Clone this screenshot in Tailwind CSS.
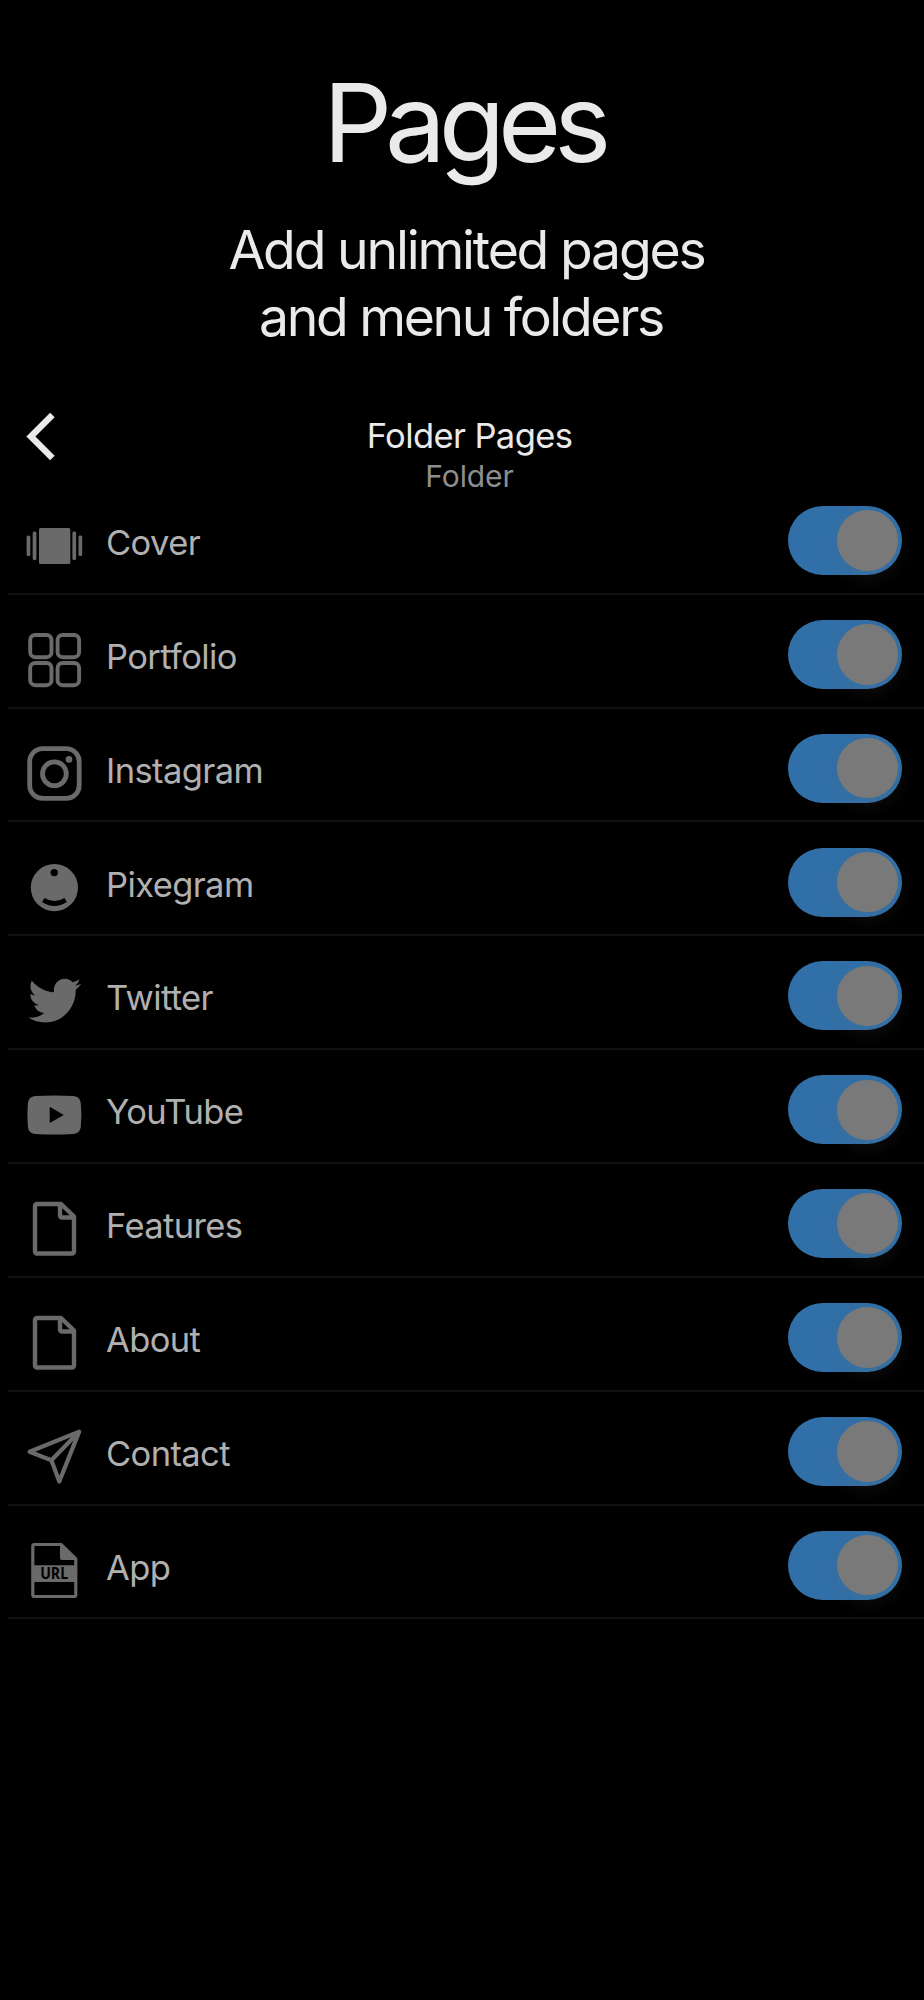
<!DOCTYPE html>
<html lang="en">
<head>
<meta charset="utf-8">
<title>Pages</title>
<script src="https://cdn.jsdelivr.net/npm/@tailwindcss/browser@4"></script>
</head>
<body class="bg-black">
<main class="flex h-[2000px] w-[924px] flex-col overflow-hidden bg-black font-['Inter',sans-serif] text-[#eaeaea]">
  <div class="flex h-[400px] flex-col items-center pt-[58px] text-center">
    <h1 class="ml-[3px] text-[108.5px] leading-[130px] tracking-[-7.3px]">Pages</h1>
    <p class="mt-[28px] ml-[9px] text-[53.5px] leading-[67px] tracking-[-2.2px]">Add unlimited pages</p>
    <p class="mr-[2px] text-[53.5px] leading-[67px] tracking-[-2.35px]">and menu folders</p>
  </div>
  <header class="grid h-[80.8px] shrink-0 grid-cols-[100px_1fr_85px] pt-[11px]">
    <svg class="ml-[24px] h-[52px] w-[36px]" viewBox="0 0 36 52" fill="none" stroke="#eaeaea" stroke-width="6.4"><path d="M28.4 3.900L6.900 25.400l21.500 21.600"/></svg>
    <div class="flex flex-col items-center">
      <h2 class="text-[34.5px] leading-[50px] tracking-[-0.6px]">Folder Pages</h2>
      <p class="-mt-[5px] text-[30px] leading-[40px] tracking-[-0.1px] text-[#8e8e8e]">Folder</p>
    </div>
  </header>
  <ul id="list" class="ml-[8px] text-[34.5px] tracking-[-0.6px] text-[#b0b0b0]"></ul>
</main>

<template id="row">
  <li class="flex h-[113.87px] items-center border-b-2 border-[#111111] pt-[7.5px]">
    <svg class="mt-[11px] ml-[18px] size-[56px] shrink-0 overflow-visible text-[#6a6a6a]" viewBox="0 0 56 56" fill="none"></svg>
    <span class="mt-[5px] ml-[24px] flex-1 leading-[44px]"></span>
    <div class="mr-[22px] flex h-[69px] w-[114px] items-center justify-end overflow-visible rounded-full bg-[#306fa7] pr-[4.5px]">
      <div class="size-[60.5px] rounded-full bg-[#797979] shadow-[0_6px_18px_rgba(121,121,121,0.16)]"></div>
    </div>
  </li>
</template>

<script>
const page = `<path d="M35 3H11a2 2 0 0 0-2 2v45.500a2 2 0 0 0 2 2h35a2 2 0 0 0 2-2V15.500Z M34 4v10.500a2 2 0 0 0 2 2h11" stroke="currentColor" stroke-width="4.400" stroke-linejoin="round"/>`;
const rows = [
  ['Cover', `<g fill="currentColor"><rect x=".6" y="17.600" width="3.700" height="20.400" rx="1.500"/><rect x="6.700" y="13.600" width="3.700" height="28.400" rx="1.500"/><rect x="13" y="9.900" width="31.300" height="36" rx="1.500"/><rect x="46.400" y="13.600" width="3.700" height="28.400" rx="1.500"/><rect x="52.500" y="17.600" width="3.700" height="20.400" rx="1.500"/></g>`],
  ['Portfolio', `<g stroke="currentColor" stroke-width="3.900"><rect x="4.200" y="3" width="21.300" height="22.200" rx="5"/><rect x="31.600" y="3" width="21.500" height="22.200" rx="5"/><rect x="4.200" y="31" width="21.300" height="22.200" rx="5"/><rect x="31.600" y="31" width="21.500" height="22.200" rx="5"/></g>`],
  ['Instagram', `<g stroke="currentColor" stroke-width="4.800"><rect x="3.700" y="2.600" width="49.500" height="49.800" rx="13"/><circle cx="28.400" cy="27.800" r="11.900"/></g><circle cx="43" cy="13.400" r="3.300" fill="currentColor"/>`],
  ['Pixegram', `<circle cx="28.400" cy="27.600" r="23.600" fill="currentColor"/><circle cx="28.200" cy="12.600" r="3.700" fill="#000"/><path d="M17.300 40Q28.400 47 39.600 40" stroke="#000" stroke-width="4.800"/>`],
  ['Twitter', `<path transform="translate(2.300 .7) scale(2.200 2.240)" fill="currentColor" d="M23.954 4.569c-.885.389-1.830.654-2.825.775 1.014-.611 1.794-1.574 2.163-2.723-.951.555-2.005.959-3.127 1.184-.896-.959-2.173-1.559-3.591-1.559-2.717 0-4.920 2.203-4.920 4.917 0 .39.045.765.127 1.124C7.691 8.094 4.066 6.130 1.640 3.161c-.427.722-.666 1.561-.666 2.475 0 1.710.87 3.213 2.188 4.096-.807-.026-1.566-.248-2.228-.616v.061c0 2.385 1.693 4.374 3.946 4.827-.413.111-.849.171-1.296.171-.314 0-.615-.03-.916-.086.631 1.953 2.445 3.377 4.604 3.417-1.680 1.319-3.809 2.105-6.102 2.105-.39 0-.779-.023-1.170-.067 2.189 1.394 4.768 2.209 7.557 2.209 9.054 0 13.999-7.496 13.999-13.986 0-.209 0-.42-.015-.63.961-.689 1.800-1.560 2.460-2.548l-.047-.02z"/>`],
  ['YouTube', `<path fill="currentColor" fill-rule="evenodd" d="M9 9Q28.400 7.800 47.500 9Q54 9.700 54.800 16Q56 28 54.800 40Q54 46.200 47.500 46.900Q28.400 48.200 9 46.900Q2.700 46.200 1.900 40Q.8 28 1.900 16Q2.700 9.700 9 9ZM23.700 19.800V36L37.800 27.900Z"/>`],
  ['Features', page],
  ['About', page],
  ['Contact', `<path d="M53.200 2.600L3.600 22.700L25.400 31.200L33.300 52.500ZM25.400 31.200L53.200 2.600" stroke="currentColor" stroke-width="4.200" stroke-linejoin="round"/>`],
  ['App', `<path d="M35 1.500H8.300a1.500 1.500 0 0 0-1.500 1.500v49a1.500 1.500 0 0 0 1.500 1.500h40a1.500 1.500 0 0 0 1.500-1.500V16Z" stroke="currentColor" stroke-width="3.200" stroke-linejoin="round"/><path d="M34 1v14q0 2 2 2h14.500v-1L35.500 1ZM6 22.200h44v16.800H6Z" fill="currentColor"/><text x="28.200" y="36" text-anchor="middle" textLength="28" lengthAdjust="spacingAndGlyphs" font-family="Open Sans" font-weight="700" font-size="15.500" letter-spacing="0" fill="#000">URL</text>`],
];
const list = document.getElementById('list'), tpl = document.getElementById('row');
for (const [label, icon] of rows) {
  const li = tpl.content.cloneNode(true);
  li.querySelector('svg').innerHTML = icon;
  li.querySelector('span').textContent = label;
  list.append(li);
}
</script>
</body>
</html>
